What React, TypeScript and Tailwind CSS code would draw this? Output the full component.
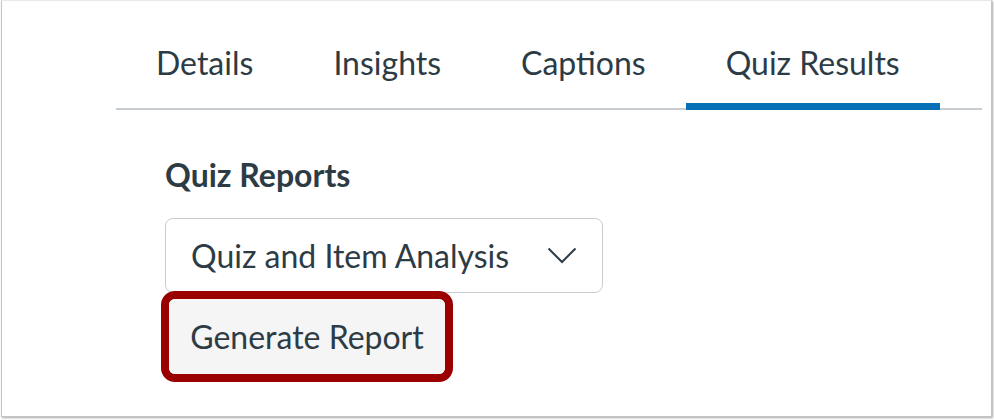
import { useState } from 'react';

const tabs = ['Details', 'Insights', 'Captions', 'Quiz Results'];

export default function App() {
  const [active, setActive] = useState('Quiz Results');

  return (
    <div className="w-[994px] h-[420px] bg-white font-['Lato','Liberation_Sans',sans-serif] text-[#2d3b45]">
      {/* screenshot frame */}
      <div className="ml-[1px] w-[991px] h-[417px] border border-[#c4c4c4] border-t-[#e8e8e8] shadow-[1px_1px_2px_rgba(0,0,0,0.35)]">
        <div className="pl-[114px]">
          {/* tab list */}
          <div role="tablist" className="flex w-[866px] border-b-2 border-[#c7cdd1]">
            {tabs.map((t) => (
              <button
                key={t}
                role="tab"
                onClick={() => setActive(t)}
                className={
                  'px-[40px] pt-[41px] pb-[20px] -mb-[2px] border-b-[7px] text-[32px] leading-[41px] ' +
                  (active === t ? 'border-[#0770b7]' : 'border-transparent')
                }
              >
                {t}
              </button>
            ))}
          </div>

          <div className="pl-[49px]">
            <h2 className="mt-[47px] text-[32px] leading-[36px] font-bold">Quiz Reports</h2>

            <div className="mt-[25px] flex h-[75px] w-[438px] items-center justify-between rounded-lg border border-[#c7cdd1] pl-[25px] pr-[25px]">
              <span className="text-[32px] leading-[38px]">Quiz and Item Analysis</span>
              <svg width="30" height="17" viewBox="0 0 30 17" fill="none" stroke="#2d3b45" strokeWidth="2">
                <path d="M1.5 1.5 L15 15 L28.5 1.5" />
              </svg>
            </div>

            {/* highlighted button */}
            <div className="-mt-[2px] -ml-[4px] w-[292px] rounded-[14px] border-[8px] border-[#9b0000]">
              <button className="flex h-[75px] w-full items-center justify-center rounded-[6px] bg-[#f5f5f5] text-[32px] leading-[38px]">
                Generate Report
              </button>
            </div>
          </div>
        </div>
      </div>
    </div>
  );
}
